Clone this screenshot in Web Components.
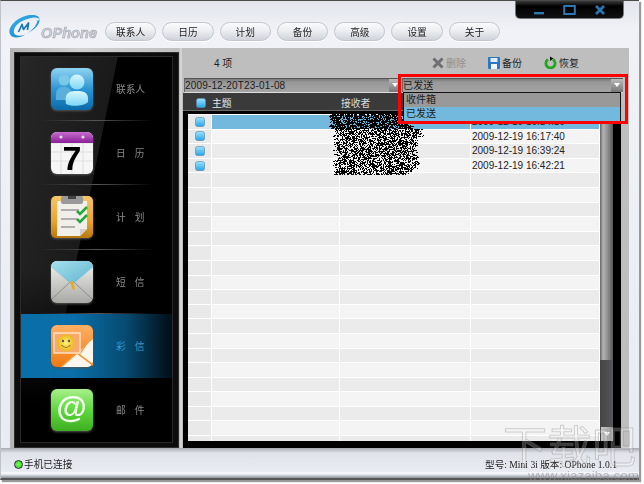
<!DOCTYPE html>
<html lang="zh"><head><meta charset="utf-8"><title>OPhone</title>
<style>
html,body{margin:0;padding:0;background:#fff;overflow:hidden;width:644px;height:484px}
body{font-family:"Liberation Sans","Noto Sans CJK SC",sans-serif;font-size:11px;color:#222}
</style></head><body>
<op-window>
  <op-topbar slot="top">
    <op-nav>联系人</op-nav><op-nav>日历</op-nav><op-nav>计划</op-nav><op-nav>备份</op-nav><op-nav>高级</op-nav><op-nav>设置</op-nav><op-nav>关于</op-nav>
  </op-topbar>
  <op-sidebar slot="side">
    <op-side-item icon="contacts" wide>联系人</op-side-item>
    <op-side-item icon="calendar">日历</op-side-item>
    <op-side-item icon="plan">计划</op-side-item>
    <op-side-item icon="sms">短信</op-side-item>
    <op-side-item icon="mms" active>彩信</op-side-item>
    <op-side-item icon="email" last>邮件</op-side-item>
  </op-sidebar>
  <op-content slot="main"></op-content>
  <op-status slot="status"></op-status>
</op-window>
<op-watermark></op-watermark>
<script>
const def=(name,html,init)=>customElements.define(name,class extends HTMLElement{
  constructor(){super();this.attachShadow({mode:'open'}).innerHTML=typeof html==='function'?html(this):html;}
  connectedCallback(){if(init&&!this._d){this._d=1;init(this)}}
});
const CJK='"Liberation Sans","Noto Sans CJK SC",sans-serif';

def('op-window',`<style>
:host{display:flex;flex-direction:column;width:639px;height:480px;box-sizing:border-box;background:linear-gradient(#e2e5ec,#f0f2f7 30px,#e8ebf2);border-top:1px solid #4a4a4a;border-left:1px solid #bfc2c8;border-bottom:2px solid #555;box-shadow:2px 2px 1px #999;filter:blur(.35px)}
.top{height:47px;flex:none}
.mid{display:flex;height:400px;flex:none;margin:0 10px 0 9px}
.st{flex:1;min-height:0}
</style><div class="top"><slot name="top"></slot></div><div class="mid"><slot name="side"></slot><slot name="main"></slot></div><div class="st"><slot name="status"></slot></div>`);

def('op-topbar',`<style>
:host{display:flex;height:47px;position:relative}
.logo{flex:none;width:97px;height:30px;margin:12px 0 0 7px;display:flex;align-items:flex-end}
.logo svg{flex:none;margin-bottom:3px}
.name{font:italic bold 14.5px "Liberation Sans",sans-serif;color:#cdd0d7;-webkit-text-stroke:.5px #9a9ea6;margin:0 0 2px 0;letter-spacing:.1px}
nav{display:flex;gap:6px;margin:21px 0 0 0;height:20px}
.ctl{flex:none;margin-left:auto;margin-right:15px;width:109px;height:18px;background:linear-gradient(#3a3a3a,#000 30%,#111);border-radius:0 0 5px 5px;border:1px solid #777;border-top:0;box-sizing:border-box;display:flex;justify-content:space-around;align-items:center;padding:0 8px}
</style>
<div class="logo"><svg width="33" height="26" viewBox="0 0 33 26"><defs><linearGradient id="l" x1="0" y1="0" x2="1" y2="1"><stop offset="0" stop-color="#3ab4ea"/><stop offset="1" stop-color="#0f7cc4"/></linearGradient></defs>
<path d="M1.5 19C0 13 8 4 19 1.5C27 0 32 2 31.5 6C31 2.5 25 3 19 5C10 8 5 13 6 19C7 22 12 22.5 17 20.5C12 24.5 3 25 1.5 19Z" fill="url(#l)"/>
<path d="M31.5 6C31.5 11 26 16 19 19.5C25 15.5 29 11 29.5 6.5Z" fill="#1f93d8"/>
<path d="M10.5 18L14 10.5L15.5 15.5L20.5 9L19.5 16" fill="none" stroke="#1578b8" stroke-width="1.7" stroke-linejoin="round"/></svg><span class="name">OPhone</span></div>
<nav><slot></slot></nav>
<div class="ctl">
<svg width="12" height="12" viewBox="0 0 12 12"><rect x="1" y="8" width="10" height="2.4" fill="#2b78b4"/></svg>
<svg width="13" height="12" viewBox="0 0 13 12"><rect x="1.2" y="2" width="10.6" height="8" fill="none" stroke="#2b78b4" stroke-width="2"/></svg>
<svg width="12" height="12" viewBox="0 0 12 12"><path d="M2 2L10 10M10 2L2 10" stroke="#2b78b4" stroke-width="2.6"/></svg>
</div>`);

def('op-nav',`<style>
:host{display:flex;align-items:center;justify-content:center;width:51.3px;height:19px;box-sizing:border-box;border:1px solid #c2c6ce;border-radius:10px;background:linear-gradient(#fafbfc,#eceef2 45%,#cfd3da);font:9.7px ${CJK};color:#222;box-shadow:0 1px 0 #fff}
</style><slot></slot>`);

def('op-sidebar',`<style>
:host{display:block;flex:none;width:170px;box-sizing:border-box;padding:4px 1px 0 4px;background:linear-gradient(90deg,#b4b4b4,#d0d0d0 40%,#c0c0c0);}
.o{height:396px;box-sizing:border-box;background:#0c0c0c;border:1px solid #2c2c2c;padding:3px 5px 4px 5px;}
.i{height:387px;box-sizing:border-box;border:1px solid #2a2a2a;background:linear-gradient(#0000 55%,#000 90%),linear-gradient(101.5deg,#272727 0,#1a1a1a 42%,#000 42.4%);}
</style><div class="o"><div class="i"><slot></slot></div></div>`);

const ICON={
contacts:`<defs><linearGradient id="a" x1="0" y1="0" x2="0" y2="1"><stop offset="0" stop-color="#8fd4f2"/><stop offset=".5" stop-color="#2c96d4"/><stop offset="1" stop-color="#0c6aa8"/></linearGradient><linearGradient id="b" x1="0" y1="0" x2="0" y2="1"><stop offset="0" stop-color="#d8f6ff"/><stop offset="1" stop-color="#7cd8f4"/></linearGradient></defs>
<rect width="42" height="42" rx="6" fill="url(#a)"/><circle cx="13" cy="12" r="5.5" fill="#7cc8e8"/><path d="M5 32 C4 20 8 19 13 19 C18 19 22 21 21 32 Z" fill="#5aafdc"/><circle cx="26" cy="14" r="7.5" fill="url(#b)"/><path d="M15 36 C13 24 19 23 26 23 C34 23 38 25 37 34 C34 38 20 39 15 36Z" fill="url(#b)"/>`,
calendar:`<defs><linearGradient id="a" x1="0" y1="0" x2="0" y2="1"><stop offset="0" stop-color="#c86cd0"/><stop offset="1" stop-color="#8a1f98"/></linearGradient></defs>
<rect width="42" height="42" rx="6" fill="#f6f6f6"/><path d="M0 11H42M0 20H42M0 29H42M10 11V42M21 11V42M32 11V42" stroke="#e0e0e0"/><path d="M0 6a6 6 0 0 1 6-6H36a6 6 0 0 1 6 6V11H0Z" fill="url(#a)"/><circle cx="10" cy="5" r="1.6" fill="#ddd"/><circle cx="32" cy="5" r="1.6" fill="#ddd"/><text x="21" y="38" text-anchor="middle" font-family="Liberation Sans" font-weight="bold" font-size="34" fill="#000">7</text>`,
plan:`<defs><linearGradient id="a" x1="0" y1="0" x2="0" y2="1"><stop offset="0" stop-color="#f6c668"/><stop offset=".6" stop-color="#eba52c"/><stop offset="1" stop-color="#b87810"/></linearGradient></defs>
<rect width="42" height="42" rx="5" fill="url(#a)"/><path d="M6 5H36V33L29 40H6Z" fill="#f0efe9"/><path d="M29 40L36 33H29Z" fill="#cfcfcf"/><rect x="10" y="0" width="22" height="8" rx="2" fill="#9a9a9a"/><rect x="17" y="0" width="8" height="3" fill="#444"/><path d="M10 14H28M10 23H26M10 31H24" stroke="#9a9a9a" stroke-width="1.6"/><path d="M26 15L29 18L36 11M26 23L29 26L36 19" fill="none" stroke="#22a83c" stroke-width="2.6"/>`,
sms:`<defs><linearGradient id="a" x1="0" y1="0" x2="0" y2="1"><stop offset="0" stop-color="#f2f2ee"/><stop offset="1" stop-color="#a8a8a4"/></linearGradient><linearGradient id="b" x1="0" y1="0" x2="1" y2="1"><stop offset="0" stop-color="#a6e0ec"/><stop offset="1" stop-color="#5fb4cf"/></linearGradient></defs>
<rect width="42" height="42" rx="6" fill="url(#a)"/><path d="M1 38L19 21M41 38L23 21" stroke="#8e8e8a"/><path d="M0 6a6 6 0 0 1 6-6H36a6 6 0 0 1 6 6L21 24Z" fill="url(#b)"/><path d="M19 21l3-1 2 8-2 1z" fill="#f0a818"/>`,
mms:`<defs><linearGradient id="a" x1="0" y1="0" x2="0" y2="1"><stop offset="0" stop-color="#ffb066"/><stop offset="1" stop-color="#f07a10"/></linearGradient><radialGradient id="f"><stop offset="0" stop-color="#fff27a"/><stop offset="1" stop-color="#e8b820"/></radialGradient></defs>
<rect width="42" height="42" rx="6" fill="url(#a)"/><path d="M10 42L42 14V36a6 6 0 0 1-6 6Z" fill="#fdf6ec"/><path d="M10 42L26 28L42 40M28 30L36 18" stroke="#f59a3c" stroke-width="1.6" fill="none"/><rect x="3" y="8" width="26" height="20" fill="#f9a968" stroke="#fde4cc" stroke-width="1.4"/><circle cx="15" cy="18" r="8.5" fill="url(#f)"/><circle cx="12" cy="16" r="1.2" fill="#654"/><circle cx="18" cy="16" r="1.2" fill="#654"/><path d="M10.5 20Q15 25 19.5 20" stroke="#a5641a" stroke-width="1.1" fill="none"/>`,
email:`<defs><linearGradient id="a" x1="0" y1="0" x2="0" y2="1"><stop offset="0" stop-color="#a8f08c"/><stop offset=".5" stop-color="#5ed83c"/><stop offset="1" stop-color="#3fae22"/></linearGradient></defs>
<rect width="42" height="42" rx="6" fill="url(#a)"/><text x="20.5" y="29" text-anchor="middle" font-family="Liberation Sans" font-weight="bold" font-size="31" fill="#f4fff0">@</text>`};

def('op-side-item',el=>{const two=!el.hasAttribute('wide');const act=el.hasAttribute('active');return `<style>
:host{display:flex;align-items:center;height:64.2px;box-sizing:border-box;position:relative;padding-left:30px;font:9.7px ${CJK};color:${act?'#3c98c8':'#8a8a8a'};${act?'background:linear-gradient(90deg,#0a6ea8,#0a6ea8 35%,#064a70 70%,#02121c 97%);':''}}
svg{flex:none;overflow:visible;filter:drop-shadow(0 1px 1px #555)}
.t{margin-left:23px;white-space:nowrap;letter-spacing:${two?'9px':'0'}}
.s{position:absolute;left:18px;right:18px;bottom:0;height:1px;background:linear-gradient(90deg,#0000,#555,#0000);${act||el.hasAttribute('last')?'display:none':''}}
</style><svg width="42" height="42" viewBox="0 0 42 42">${ICON[el.getAttribute('icon')]}</svg><span class="t"><slot></slot></span><i class="s"></i>`});

def('op-combo',el=>`<style>
:host{display:flex;align-items:center;height:14px;box-sizing:border-box;background:linear-gradient(#7c7c7c,#989898 25%,#a4a4a4);border-top:1px solid #555;border-left:1px solid #666;font:10px ${CJK};color:#1c1c1c;padding-left:0;overflow:hidden;box-shadow:0 1px 0 #ddd}
span{flex:1;line-height:13px;white-space:nowrap;letter-spacing:.16px}
b{flex:none;width:12px;height:13px;background:linear-gradient(#bbb,#777);position:relative}
b::after{content:"";position:absolute;left:3px;top:4px;border:3px solid #0000;border-top:4px solid #fff}
</style><span><slot></slot></span><b></b>`);

const CHK=`<svg width="10" height="10" viewBox="0 0 10 10"><defs><linearGradient id="c" x1="0" y1="0" x2="0" y2="1"><stop offset="0" stop-color="#9be4ff"/><stop offset="1" stop-color="#28a4ec"/></linearGradient></defs><rect x=".5" y=".5" width="9" height="9" rx="2" fill="url(#c)" stroke="#5e8ea8" stroke-width=".7"/></svg>`;

def('op-table',`<style>
:host{display:block;position:relative;height:355px;margin:0 8px 0 3px;background:#000;box-sizing:border-box;}
.hd{height:18px;box-sizing:border-box;padding-top:2px;background:#3a3a3a;border-bottom:1px solid #6a6a6a;position:relative;display:grid;grid-template-columns:158px 131px 1fr;align-items:center;color:#e8e8e8;font:9.8px ${CJK}}
.hd>div:first-child{display:flex;align-items:center;gap:6px;padding-left:13px}
.hd>div+div{color:#ddd}
.body{display:flex;margin:3px 0 0 5px;height:327px}
.rows{width:412px;flex:none;overflow:hidden;background:#fff;box-sizing:border-box;border-top:1px solid #fff;display:grid;grid-template-columns:24px 128px 131px 1fr;grid-auto-rows:14.6px}
.rows>div{box-sizing:border-box;border-right:1px solid #fff;border-bottom:1px solid #fff;display:flex;align-items:center;font:10px ${CJK};color:#222;padding-left:1px;white-space:nowrap}
.c{justify-content:center;background:#e9e9e9}
.sb{width:13px;flex:none;background:linear-gradient(90deg,#444,#56565c);position:relative}
.th{position:absolute;left:0;right:0;top:10px;height:236px;background:linear-gradient(90deg,#666,#b4b4b4 25%,#8e8e8e 60%,#555)}
.dn{position:absolute;left:1px;right:0;bottom:0;height:14px;background:linear-gradient(90deg,#c8c8c8,#9a9a9a)}
.dn::after{content:"";position:absolute;left:3px;top:5px;border:3px solid #0000;border-top:4px solid #fff}
svg.blob{position:absolute;left:145px;top:20px}
</style>
<div class="hd"><div>${CHK}<span>主题</span></div><div>接收者</div><div></div></div>
<div class="body"><div class="rows"></div><div class="sb"><div class="th"></div><div class="dn"></div></div></div>`,
el=>{
 const times=['2009-12-19 16:14:16','2009-12-19 16:17:40','2009-12-19 16:39:24','2009-12-19 16:42:21'];
 let h='';
 for(let i=0;i<23;i++){const bg=i==0?'#73b9dd':(i%2?'#f4f4f4':'#ebebeb');
  h+=`<div class="c">${i<4?CHK:''}</div><div style="background:${bg}"></div><div style="background:${bg}"></div><div style="background:${bg}">${times[i]||''}</div>`;}
 el.shadowRoot.querySelector('.rows').innerHTML=h;
 let s=12345;const r=()=>{s=(s*1664525+1013904223)%4294967296;return s/4294967296};
 let d='';
 for(let y=0;y<62;y++){
  const top=y<16;
  const a=(top?0:5)+r()*5, b=(top?86:(y<24?97:(y<36?90:92)))-r()*6-(y>54?(y-54)*1.2:0);
  for(let x=a;x<b;x++){const den=top?.75:.58;if(r()<den)d+=`M${Math.round(x)} ${y}h1v1h-1z`;}
 }
 const ns='http://www.w3.org/2000/svg';
 const sv=document.createElementNS(ns,'svg');sv.setAttribute('class','blob');sv.setAttribute('width',100);sv.setAttribute('height',62);
 const p=document.createElementNS(ns,'path');p.setAttribute('d',d);p.setAttribute('fill','#000');sv.appendChild(p);
 el.shadowRoot.appendChild(sv);
});

def('op-tool',el=>`<style>:host{display:flex;align-items:center;gap:2.5px;font:10px ${CJK};color:${el.hasAttribute('off')?'#8f8f8f':'#222'}}</style><slot name="i"></slot><slot></slot>`);

def('op-content',`<style>
:host{display:block;flex:1;background:#bebebe;position:relative;box-shadow:inset 2px 0 0 #d4d4d4;padding-top:1px;box-sizing:border-box}
.tb{display:flex;align-items:center;height:27px;padding:0 50px 0 34px;font:10px ${CJK};color:#222}
.acts{display:flex;margin-left:auto;gap:21.5px}
.cb{display:flex;gap:1px;margin:2px 6px 1px 4px}
.cb op-combo:first-child{flex:0 0 217px}.cb op-combo:last-child{flex:1}
.red{position:absolute;left:218px;top:26px;width:230px;height:50px;box-sizing:border-box;border:3px solid #f00}
.list{position:absolute;left:223px;top:44px;width:218px;height:29px;box-sizing:border-box;border:1px solid #111;background:#999;font:10px ${CJK};color:#1c1c1c}
.list div{height:14px;line-height:14px;padding-left:2px}
.list .on{background:#73b9dd}
</style>
<div class="tb"><span>4 项</span><div class="acts">
<op-tool off><svg slot="i" width="12" height="12" viewBox="0 0 12 12"><path d="M1.5 1.5L10.5 10.5M10.5 1.5L1.5 10.5" stroke="#6f6f6f" stroke-width="3"/></svg>删除</op-tool>
<op-tool><svg slot="i" width="12" height="12" viewBox="0 0 12 12"><rect width="12" height="12" rx="1" fill="#2a78c4"/><rect x="2.5" y="1" width="7" height="4" fill="#dfefff"/><rect x="3" y="7" width="6" height="5" fill="#f4f8fc"/></svg>备份</op-tool>
<op-tool><svg slot="i" width="13" height="13" viewBox="0 0 13 13"><path d="M4 3.5A4.6 4.6 0 1 0 9 3.5" fill="none" stroke="#22a81e" stroke-width="2.8"/><path d="M6 0.5V5L9.5 2.5Z" fill="#111"/></svg>恢复</op-tool>
</div></div>
<div class="cb"><op-combo>2009-12-20T23-01-08</op-combo><op-combo>已发送</op-combo></div>
<op-table></op-table>
<div class="list"><div>收件箱</div><div class="on">已发送</div></div>
<div class="red"></div>`);

def('op-status',`<style>
:host{display:flex;align-items:center;justify-content:space-between;height:100%;box-sizing:border-box;padding:2px 22px 0 13px;font:9.7px ${CJK};color:#222;background:linear-gradient(#a8abb2,#e0e3ea 5px,#e8ebf2 24px,#fff 25px,#d8dbe2 27px,#8e9098)}
.l{display:flex;align-items:center;gap:1px}
.d{width:9px;height:9px;border-radius:50%;background:radial-gradient(#7dff5a,#1ecb1e);border:1px solid #333;box-sizing:border-box}
.r{font:9.6px "Liberation Serif","Noto Sans CJK SC",serif;color:#222}
</style><div class="l"><i class="d"></i><span>手机已连接</span></div><div class="r">型号: Mini 3i 版本: OPhone 1.0.1</div>`);

def('op-watermark',`<style>
:host{position:absolute;left:503px;top:420px;width:141px;height:64px;overflow:hidden;pointer-events:none}
.a{font:44px/48px "Noto Sans CJK SC",sans-serif;color:#ffffff38;-webkit-text-stroke:1px #7c7c7c55;white-space:nowrap;letter-spacing:.5px}
.b{position:absolute;left:25px;top:48px;font:13.5px/15px "Liberation Sans",sans-serif;color:#88888888;white-space:nowrap}
</style><div class="a">下载吧</div><div class="b">www.xiazaiba.com</div>`);
</script>
</body></html>
